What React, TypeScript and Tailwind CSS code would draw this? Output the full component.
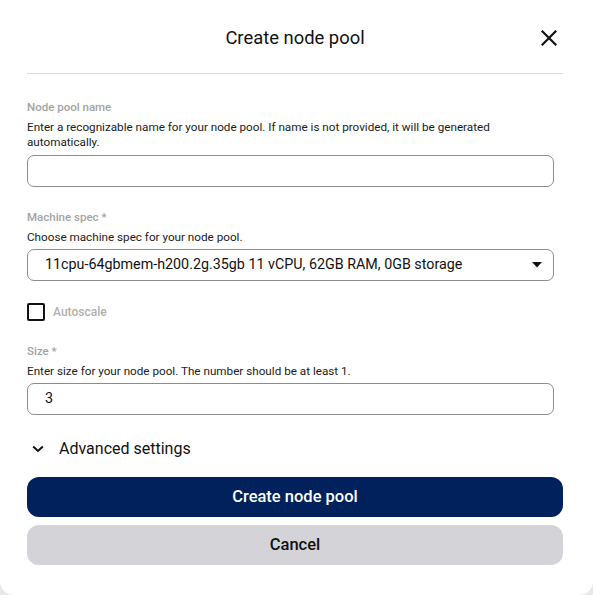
import React from "react";

const font = { fontFamily: "Roboto, 'Liberation Sans', sans-serif" };

function Label({ children }: { children: React.ReactNode }) {
  return <div className="text-[11.5px] leading-[15px] font-medium text-[#a3a3a3]">{children}</div>;
}

function Desc({ children }: { children: React.ReactNode }) {
  return <div className="mt-[5px] max-w-[527px] text-[11.7px] leading-[15px] text-[#1a1a1a]">{children}</div>;
}

export default function App() {
  return (
    <div className="w-[593px] h-[595px] bg-[#e9e9ec]" style={font}>
      <div className="w-full h-full bg-white rounded-b-[14px] flex flex-col">
        <div className="ml-[27px] w-[536px] h-[74px] grid grid-cols-[1fr_auto_1fr] items-center border-b border-[#d9d9d9]">
          <div />
          <div className="text-[18.4px] leading-[24px] text-[#111] pt-[2px]">Create node pool</div>
          <div className="flex justify-end pr-[6px]">
            <svg width="16" height="16" viewBox="0 0 16 16" className="mt-[2px]">
              <path d="M1.5 1.5 L14.5 14.5 M14.5 1.5 L1.5 14.5" stroke="#111" strokeWidth="2.2" strokeLinecap="square" />
            </svg>
          </div>
        </div>

        <div className="px-[27px] pt-[26px] flex flex-col">
          <Label>Node pool name</Label>
          <Desc>
            Enter a recognizable name for your node pool. If name is not provided, it will be generated automatically.
          </Desc>
          <div className="mt-[5px] w-[527px] h-[32px] rounded-[7px] border border-[#8c8c8c]" />

          <div className="mt-[23px]">
            <Label>Machine spec *</Label>
          </div>
          <Desc>Choose machine spec for your node pool.</Desc>
          <div className="mt-[4px] w-[527px] h-[32px] rounded-[7px] border border-[#8c8c8c] flex items-center pl-[17px] pr-[11px]">
            <span className="flex-1 text-[14.3px] text-[#111]">
              11cpu-64gbmem-h200.2g.35gb 11 vCPU, 62GB RAM, 0GB storage
            </span>
            <svg width="10" height="6" viewBox="0 0 10 6">
              <path d="M0 0 L10 0 L5 5.5 Z" fill="#111" />
            </svg>
          </div>

          <div className="mt-[22px] flex items-center gap-[8px]">
            <div className="w-[18px] h-[18px] rounded-[2px] border-2 border-[#111] box-border" />
            <span className="text-[12px] font-medium text-[#b0b0b0]">Autoscale</span>
          </div>

          <div className="mt-[23px]">
            <Label>Size *</Label>
          </div>
          <Desc>Enter size for your node pool. The number should be at least 1.</Desc>
          <div className="mt-[4px] w-[527px] h-[32px] rounded-[7px] border border-[#8c8c8c] flex items-center pl-[17px]">
            <span className="text-[14.3px] text-[#111]">3</span>
          </div>

          <div className="mt-[22px] flex items-center h-[24px]">
            <svg width="12" height="8" viewBox="0 0 12 8" className="ml-[5px]">
              <path d="M1.2 1.5 L6 6 L10.8 1.5" fill="none" stroke="#111" strokeWidth="2" />
            </svg>
            <span className="ml-[15px] text-[16px] text-[#111]">Advanced settings</span>
          </div>

          <button className="mt-[16px] w-[536px] h-[40px] rounded-[12px] bg-[#00215c] text-white text-[16.5px] font-medium">
            Create node pool
          </button>
          <button className="mt-[8px] w-[536px] h-[40px] rounded-[12px] bg-[#d4d4d8] text-[#111] text-[16.5px] font-medium">
            Cancel
          </button>
        </div>
      </div>
    </div>
  );
}
